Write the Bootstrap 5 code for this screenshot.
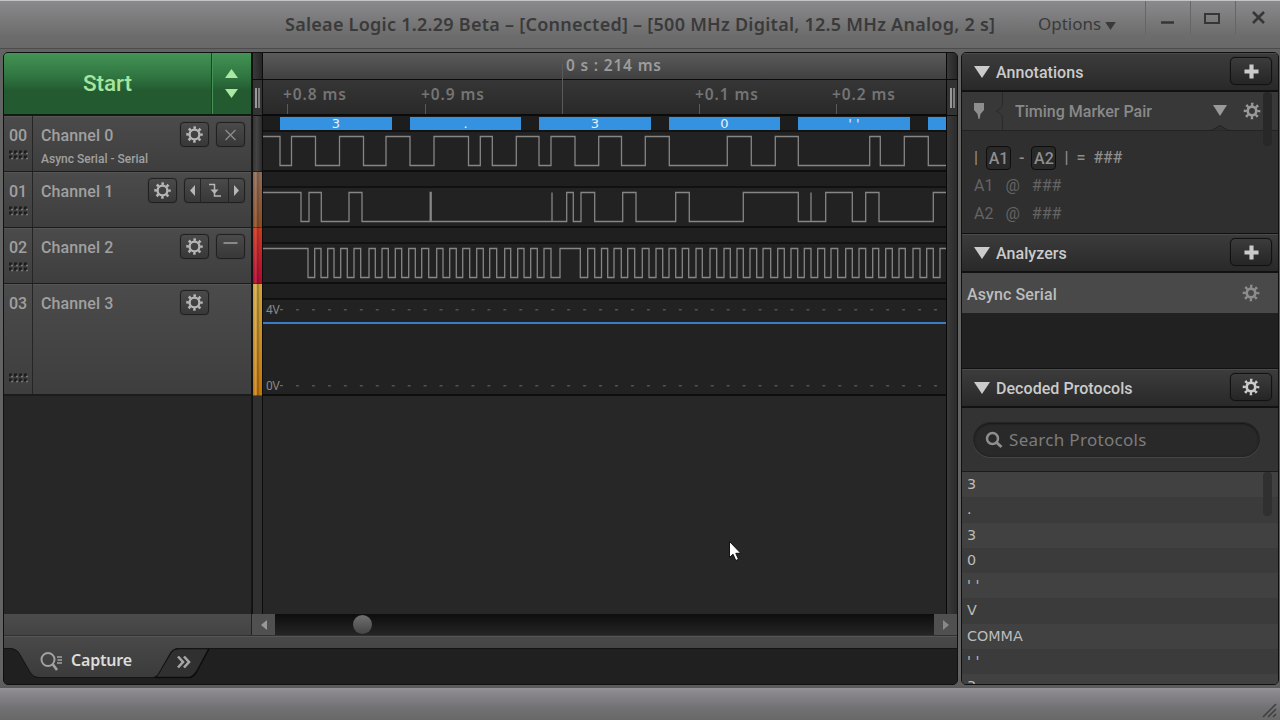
<!DOCTYPE html>
<html lang="en">
<head>
  <meta charset="UTF-8">
  <title>Saleae Logic</title>
  <meta name="viewport" content="width=device-width, initial-scale=1">
  <link href="https://cdn.jsdelivr.net/npm/bootstrap@5.3.3/dist/css/bootstrap.min.css" rel="stylesheet">
  <style>
    body {
      width: 1280px;
      height: 720px;
      overflow: hidden;
      background: #606060;
      font-family: Roboto, "Liberation Sans", sans-serif;
      font-size: 16px;
      line-height: 20px;
      color: #a0a0a0;
      cursor: default;
    }
    svg { display: block; flex: none; }
    .noto { font-family: "Noto Sans", "Open Sans", sans-serif; }

    /* window frame */
    .title-bar {
      height: 49px;
      background: linear-gradient(#8a898c, #6c6c6c 75%, #686868);
      border-top: 1px solid #c4c4c4;
      border-bottom: 1px solid #4c4c4c;
      color: #3a3a3a;
      padding-bottom: 2px;
    }
    .win-title { width: 712px; margin-left: 285px; font-size: 18px; font-weight: 600; letter-spacing: .26px; white-space: nowrap; }
    .options-menu { margin-left: 41px; width: 84px; font-size: 17px; }
    .win-btn { width: 45px; height: 34px; border-left: 1px solid #666; }
    .work-area { height: 639px; padding: 3px 1px 0 3px; gap: 3px; background: linear-gradient(#636363 98%, #5a5a5a); }
    .status-bar { height: 32px; background: linear-gradient(#8e8c90, #717073 60%, #686868); border-top: 2px solid #929092; padding: 0 3px 2px 0; }
    .pane { border: 1px solid #101010; border-radius: 5px; overflow: hidden; }

    /* left pane */
    .logic-pane { width: 955px; height: 633px; background: #272727; }
    .side { width: 248px; border-right: 1px solid #151515; }
    .start-row { height: 63px; border-bottom: 2px solid #111c13; background: linear-gradient(#439455, #2f7440 40%, #235a30 62%, #245a31); color: #a5e59c; }
    .start-main { font-size: 22.5px; font-weight: 500; border-right: 1px solid #1b4425; box-shadow: 1px 0 0 #479357; padding-bottom: 1px; }
    .start-steps { width: 39px; gap: 11px; }
    .strip { width: 11px; background: #303030; border-left: 1px solid #111; border-right: 1px solid #0c0c0c; }
    .strip-top { height: 63px; }
    .strip-cap { height: 27px; border-bottom: 1px solid #0b0b0b; background: linear-gradient(90deg, #3a3a3a, #262626); }
    .strip-grip { height: 36px; border-bottom: 1px solid #0b0b0b; background: #333; }
    .grip-lines { width: 5px; height: 20px; border-left: 2px solid #999; border-right: 2px solid #808080; }
    .channel { height: 56px; border-bottom: 1px solid #1c1c1c; box-shadow: inset 0 1px 0 #555; background: linear-gradient(#4b4b4b, #3e3e3e); }
    .channel.tall { height: 112px; border-bottom-width: 2px; }
    .ch-num { width: 29px; border-right: 1px solid #252525; padding: 10px 0 11px; font-weight: 500; }
    .ch-body { padding: 6px 6px 0 8px; }
    .ch-name { font-weight: 500; line-height: 28px; height: 25px; letter-spacing: .1px; }
    .ch-tools { gap: 7px; }
    .ch-sub { font-size: 12px; line-height: 14px; margin-top: 5px; font-weight: 500; }
    .tool { height: 25px; width: 29px; border: 1px solid #202020; border-radius: 4px; background: linear-gradient(#4a4a4a, #383838); box-shadow: 0 0 1px #222; color: #b6b6b6; }
    .tool.triple { width: 61px; }
    .tool.triple span { height: 23px; border-left: 1px solid #252525; }
    .tool.triple span:first-child { border-left: 0; }
    .tool-space { width: 29px; }
    .lane-color { height: 56px; border-bottom: 1px solid #00000080; }
    .lane-color.tall { height: 112px; }
    .lane-0 { background: linear-gradient(90deg, #343434, #444 40%, #2b2b2b); }
    .lane-1 { background: linear-gradient(90deg, #0000 10%, #ffffff22 25% 35%, #0002 50% 60%, #0000 75%), linear-gradient(#8d6a56, #8a4c22); }
    .lane-2 { background: linear-gradient(90deg, #0000 10%, #ffffff1c 25% 35%, #0002 50% 60%, #0000 75%), linear-gradient(#cd3b20, #b00834); }
    .lane-3 { background: linear-gradient(90deg, #0000 10%, #ffffff38 25% 35%, #0003 50% 60%, #0000 75%), linear-gradient(#cda43a, #c47608); }
    .plot { width: 683px; }
    .lane { height: 56px; background: #222; border-bottom: 2px solid #0e0e0e; }
    .lane.tall { height: 112px; }
    .bubbles { height: 16px; gap: 18px; padding: 1px 0 0 17px; border-bottom: 2px solid #121212; overflow: hidden; background: #1d1d1d; }
    .bubble { flex: none; height: 13px; background: #3592e0; color: #e6f2ff; font-size: 13px; font-weight: 500; line-height: 13px; text-align: center; overflow: hidden; font-family: "DejaVu Sans", sans-serif; }
    .lane-gap { height: 16px; border-bottom: 2px solid #111; background: #1f1f1f; }
    .gutter { width: 11px; border-left: 1px solid #080808; background: linear-gradient(90deg, #3a3a3a, #2b2b2b); }
    .scroll-row { height: 22px; background: linear-gradient(#4c4c4c, #434343); border-bottom: 1px solid #303030; }
    .scroll-left { width: 248px; border-right: 1px solid #222; }
    .scroll-btn { width: 23px; background: #505050; }
    .scroll-track { background: linear-gradient(#0d0d0d, #252525); padding: 1px 0 0 78px; }
    .scroll-knob { width: 19px; height: 19px; border-radius: 50%; background: linear-gradient(#707070, #454545); }

    /* right pane */
    .side-pane { width: 318px; height: 633px; background: #333; }
    .sec-head { height: 39px; border-bottom: 2px solid #111; background: linear-gradient(#3c3c3c, #292929); box-shadow: inset 0 1px 0 #4a4a4a; padding: 0 6px 0 12px; color: #cbcbcb; font-size: 16px; font-weight: 500; }
    .sec-head.later { height: 40px; border-top: 1px solid #111; }
    .sec-head .label { margin: 3px 0 0 6px; letter-spacing: .05px; }
    .sec-btn { width: 42px; height: 28px; border: 1px solid #121212; border-radius: 5px; background: linear-gradient(#3c3c3c, #252525); box-shadow: 0 0 1px #111; margin-bottom: 1px; }
    .marker-head { height: 39px; background: #383838; border-bottom: 1px solid #232323; color: #898989; font-size: 16px; font-weight: 500; }
    .marker-name { padding-top: 2px; }
    .marker-body { height: 102px; background: #2f2f2f; padding: 12px 0 0 12px; color: #646464; font-size: 16px; line-height: 28px; }
    .marker-body .expr { color: #8e8e8e; font-weight: 500; height: 29px; }
    .marker-body .at { margin: 0 12px 0 12px; }
    .key { width: 25px; height: 24px; line-height: 23px; border: 1px solid #0e0e0e; border-radius: 4px; background: #292929; text-align: center; }
    .key + .dash { margin: 0 7px 0 8px; }
    .sec-thumb { top: 40px; right: 6px; width: 9px; height: 54px; background: #282828; border-radius: 4px; }
    .proto-thumb { top: 0; right: 6px; width: 9px; height: 44px; background: #303030; border-radius: 4px; }
    .analyzer { height: 40px; background: #494949; color: #bcbcbc; padding: 4px 18px 0 5px; font-size: 16px; font-weight: 500; letter-spacing: .1px; }
    .analyzer-space { height: 55px; background: #212121; }
    .search-wrap { height: 63px; padding: 14px 18px 0 11px; }
    .search-box { height: 35px; border-radius: 18px; background: #292929; border: 1px solid #242424; box-shadow: inset 0 1px 2px #161616, 0 1px 0 #454545; padding-left: 11px; gap: 6px; color: #7c7c7c; font-size: 17px; }
    .search-hint { letter-spacing: .3px; }
    .protocols { border-top: 1px solid #1c1c1c; background: #3b3b3b; overflow: hidden; height: 213px; font-family: "DejaVu Sans", sans-serif; }
    .proto { height: 25.3px; line-height: 24.6px; padding-left: 5px; font-size: 14.3px; color: #bcbcbc; }
    .proto:nth-child(odd) { background: #414141; }
    .pointer { left: 728px; top: 540px; }
  </style>
</head>
<body>
  <svg width="0" height="0" class="position-absolute">
    <defs>
      <symbol id="gear" viewBox="0 0 18 18">
        <circle cx="9" cy="9" r="5.200" fill="none" stroke="currentColor" stroke-width="2.500"/>
        <circle cx="9" cy="9" r="7.300" fill="none" stroke="currentColor" stroke-width="2.800" stroke-dasharray="2.700 3.033" stroke-dashoffset="1.350"/>
      </symbol>
      <symbol id="gear-thin" viewBox="0 0 18 18">
        <circle cx="9" cy="9" r="4.300" fill="none" stroke="currentColor" stroke-width="2.700"/>
        <circle cx="9" cy="9" r="6.700" fill="none" stroke="currentColor" stroke-width="3.200" stroke-dasharray="2.300 2.962" stroke-dashoffset="1.150"/>
      </symbol>
      <symbol id="plus" viewBox="0 0 16 16"><path d="M8 .5v15M.5 8h15" stroke="currentColor" stroke-width="4.400"/></symbol>
      <symbol id="caret" viewBox="0 0 16 12"><path d="M0 0h16L8 12z" fill="currentColor"/></symbol>
      <symbol id="dots" viewBox="0 0 21 10">
        <path d="M1 2h3m2 0h3m2 0h3m2 0h3M1 7h3m2 0h3m2 0h3m2 0h3" stroke="#1d1d1d" stroke-width="3"/>
        <path d="M3 3.500h2m3 0h2m3 0h2m3 0h2M3 8.500h2m3 0h2m3 0h2m3 0h2" stroke="#777" stroke-width="1.300"/>
      </symbol>
    </defs>
  </svg>

  <header class="title-bar noto d-flex align-items-center">
    <div class="win-title">Saleae Logic 1.2.29 Beta – [Connected] – [500 MHz Digital, 12.5 MHz Analog, 2 s]</div>
    <div class="options-menu d-flex align-items-center gap-1">Options <svg class="mt-1" width="11" height="8" viewBox="0 0 16 12"><use href="#caret"/></svg></div>
    <div class="d-flex align-self-start ms-auto">
      <div class="win-btn"><svg width="44" height="34"><path d="M15 21.500h13" stroke="#363636" stroke-width="2.500"/></svg></div>
      <div class="win-btn"><svg width="44" height="34"><rect x="14" y="13" width="14" height="9" fill="none" stroke="#363636" stroke-width="2"/></svg></div>
      <div class="win-btn"><svg width="44" height="34"><path d="M17 11l11 11M28 11l-11 11" stroke="#363636" stroke-width="2.600"/></svg></div>
    </div>
  </header>

  <main class="work-area d-flex">
    <section class="pane logic-pane d-flex flex-column">
      <div class="d-flex flex-grow-1">
        <div class="side">
          <div class="start-row d-flex">
            <div class="start-main flex-grow-1 d-flex align-items-center justify-content-center">Start</div>
            <div class="start-steps d-flex flex-column align-items-center justify-content-center">
              <svg width="13" height="9"><path d="M0 9h13L6.500 0z" fill="#a9e8a2"/></svg>
              <svg width="13" height="9"><path d="M0 0h13L6.500 9z" fill="#a9e8a2"/></svg>
            </div>
          </div>
          <div id="channels"></div>
        </div>
        <div class="strip">
          <div class="strip-top">
            <div class="strip-cap"></div>
            <div class="strip-grip d-flex align-items-center justify-content-center"><div class="grip-lines"></div></div>
          </div>
          <div class="lane-color lane-0"></div>
          <div class="lane-color lane-1"></div>
          <div class="lane-color lane-2"></div>
          <div class="lane-color lane-3 tall"></div>
        </div>
        <div class="plot">
          <svg id="ruler" width="683" height="63" font-family="Noto Sans, sans-serif" font-weight="600">
            <defs>
              <linearGradient id="rulerTop" x2="0" y2="1"><stop stop-color="#5b5b5b"/><stop offset="1" stop-color="#404040"/></linearGradient>
              <linearGradient id="rulerLow" x2="0" y2="1"><stop stop-color="#363636"/><stop offset="1" stop-color="#292929"/></linearGradient>
            </defs>
            <rect width="683" height="26" fill="url(#rulerTop)"/>
            <rect y="26" width="683" height="37" fill="#0b0b0b"/>
            <rect y="27" width="683" height="34" fill="url(#rulerLow)"/>
            <path d="M299.500 11v50" stroke="#5a5a5a"/>
            <text x="303" y="18" font-size="15.500" fill="#9c9c9c" textLength="95">0 s : 214 ms</text>
          </svg>
          <div class="lane">
            <div class="bubbles d-flex" id="bubbles"></div>
            <svg class="wave" width="683" height="38"></svg>
          </div>
          <div class="lane"><div class="lane-gap"></div><svg class="wave" width="683" height="38"></svg></div>
          <div class="lane"><div class="lane-gap"></div><svg class="wave" width="683" height="38"></svg></div>
          <div class="lane tall">
            <div class="lane-gap"></div>
            <svg width="683" height="94" font-family="Roboto, sans-serif" font-size="12" fill="#888">
              <path d="M33 9.700H683M33 85.700H683" stroke="#525252" stroke-width="1.500" stroke-dasharray="3 12.950"/>
              <path d="M17 9.700h3M17 85.700h3" stroke="#777"/>
              <text x="3" y="14" textLength="14">4V</text>
              <text x="3" y="90" textLength="14">0V</text>
              <path d="M0 23H683" stroke="#3b7cc4" stroke-width="2"/>
            </svg>
          </div>
        </div>
        <div class="gutter">
          <div class="strip-top">
            <div class="strip-cap"></div>
            <div class="strip-grip d-flex align-items-center justify-content-center"><div class="grip-lines"></div></div>
          </div>
        </div>
      </div>
      <div class="scroll-row d-flex">
        <div class="scroll-left"></div>
        <div class="scroll-btn d-flex align-items-center justify-content-center"><svg width="6" height="10"><path d="M6 0v10L0 5z" fill="#999"/></svg></div>
        <div class="scroll-track flex-grow-1"><div class="scroll-knob"></div></div>
        <div class="scroll-btn d-flex align-items-center justify-content-center"><svg width="6" height="10"><path d="M0 0v10l6-5z" fill="#888"/></svg></div>
      </div>
      <svg width="953" height="48" viewBox="0 636 953 48">
        <defs><linearGradient id="tabFill" x2="0" y2="1"><stop stop-color="#494949"/><stop offset="1" stop-color="#3b3b3b"/></linearGradient></defs>
        <rect y="636" width="953" height="48" fill="#202020"/>
        <path d="M152 677L167 652Q170 648.500 174 648.500H205L193 671Q189 677.500 185 677.500H152z" fill="#303030" stroke="#0c0c0c" stroke-width="1.500"/>
        <path d="M0 636H953V648H175Q170 648 167 652L155 673Q153 677 149 677H35Q29 677 26 672L15 653Q12 648 5 648H0z" fill="url(#tabFill)"/>
        <path d="M953 648.500H175Q170 648.500 167 652L155 673Q153 677.500 149 677.500H35Q29 677.500 26 672L15 653Q12 648.500 5 648.500H0" fill="none" stroke="#141414"/>
        <path d="M0 636.500H953" stroke="#565656"/>
        <circle cx="44" cy="659.500" r="6.500" fill="none" stroke="#a2a2a2" stroke-width="2"/>
        <path d="M48.500 664l4.500 6" stroke="#a2a2a2" stroke-width="2.600"/>
        <path d="M53 657h5M53.500 660h4.500M53 663h5" stroke="#a2a2a2" stroke-width="1.300"/>
        <text x="67" y="666" font-family="Noto Sans, sans-serif" font-weight="600" font-size="16" fill="#dcdcdc" textLength="61">Capture</text>
        <path d="M174 656.500l5 5.500-5 5.500M180 656.500l5 5.500-5 5.500" fill="none" stroke="#a6a6a6" stroke-width="2.600"/>
      </svg>
    </section>

    <aside class="pane side-pane">
      <div class="sec-head d-flex align-items-center">
        <svg width="16" height="12"><use href="#caret"/></svg>
        <span class="label">Annotations</span>
        <div class="sec-btn ms-auto d-flex align-items-center justify-content-center"><svg width="15" height="15"><use href="#plus"/></svg></div>
      </div>
      <div class="position-relative">
        <div class="marker-head d-flex align-items-center">
          <svg width="53" height="38" fill="none">
            <path d="M12 11h10v7l-3.500 4-1 5h-1l-1-5-3.500-4z" fill="#8e8e8e"/>
            <path d="M40.500 0v12q0 3-3 5l-3 2 3 2q3 2 3 5v12" stroke="#2a2a2a"/>
          </svg>
          <span class="marker-name">Timing Marker Pair</span>
          <svg class="ms-auto" width="96" height="39">
            <path d="M31 13h14l-7 11z" fill="#999"/>
            <path d="M27 38.500q4 0 6-2l5-3 5 3q2 2 6 2" fill="#2f2f2f" stroke="#232323"/>
            <g color="#999"><use href="#gear-thin" x="61" y="10" width="18" height="18"/></g>
          </svg>
        </div>
        <div class="marker-body">
          <div class="expr d-flex align-items-center">
            <span>|</span><span class="key ms-2">A1</span><span class="dash">-</span><span class="key">A2</span><span class="ms-2">|</span><span class="ms-2">=</span><span class="ms-2">###</span>
          </div>
          <div class="d-flex"><span>A1</span><span class="at">@</span><span>###</span></div>
          <div class="d-flex"><span>A2</span><span class="at">@</span><span>###</span></div>
        </div>
        <div class="position-absolute top-0 sec-thumb"></div>
      </div>
      <div class="sec-head later d-flex align-items-center">
        <svg width="16" height="12"><use href="#caret"/></svg>
        <span class="label">Analyzers</span>
        <div class="sec-btn ms-auto d-flex align-items-center justify-content-center"><svg width="15" height="15"><use href="#plus"/></svg></div>
      </div>
      <div class="analyzer d-flex align-items-center justify-content-between">Async Serial <svg class="mb-1" width="18" height="18" color="#8d8d8d"><use href="#gear-thin"/></svg></div>
      <div class="analyzer-space"></div>
      <div class="sec-head later d-flex align-items-center">
        <svg width="16" height="12"><use href="#caret"/></svg>
        <span class="label">Decoded Protocols</span>
        <div class="sec-btn ms-auto d-flex align-items-center justify-content-center"><svg width="18" height="18"><use href="#gear-thin"/></svg></div>
      </div>
      <div class="search-wrap">
        <div class="search-box noto d-flex align-items-center">
          <svg width="18" height="18" fill="none" stroke="#8e8e8e"><circle cx="7.500" cy="7.500" r="5.500" stroke-width="2.500"/><path d="M11.500 11.500l5 4.500" stroke-width="3"/></svg>
          <span class="search-hint">Search Protocols</span>
        </div>
      </div>
      <div class="protocols position-relative"><div id="protocols"></div><div class="position-absolute proto-thumb"></div></div>
    </aside>
  </main>

  <footer class="status-bar d-flex align-items-end justify-content-end">
    <svg width="15" height="15" stroke="#3e3e3e" stroke-width="1.500"><path d="M1 14L14 1M6 14l8-8M11 14l3-3"/></svg>
  </footer>

  <svg class="pointer position-absolute" width="15" height="24"><path d="M1.500 1.500v16l3.500-3.300 2.800 6.300 2.700-1.200-2.700-6h5z" fill="#fff" stroke="#111"/></svg>

  <script src="https://cdn.jsdelivr.net/npm/bootstrap@5.3.3/dist/js/bootstrap.bundle.min.js"></script>
  <script>
    const gearBtn = '<div class="tool d-flex align-items-center justify-content-center"><svg width="17" height="17"><use href="#gear"/></svg></div>';
    const channels = [
      { num: "00", name: "Channel 0", sub: "Async Serial - Serial",
        extra: '<div class="tool"><svg width="27" height="23"><path d="M8.500 7l10 10M18.500 7l-10 10" stroke="#8c8c8c" stroke-width="1.300"/></svg></div>' },
      { num: "01", name: "Channel 1",
        extra: `<div class="tool triple d-flex">
          <span><svg width="15" height="23"><path d="M10 6v11L5 11.500z" fill="#b6b6b6"/></svg></span>
          <span><svg width="27" height="23"><path d="M8 5.500h5.500V17H20" fill="none" stroke="#b6b6b6" stroke-width="1.500"/><path d="M9.500 10.500h8l-4 4.500z" fill="#b6b6b6"/></svg></span>
          <span><svg width="15" height="23"><path d="M5 6v11l5-5.500z" fill="#b6b6b6"/></svg></span></div>` },
      { num: "02", name: "Channel 2",
        extra: '<div class="tool"><svg width="27" height="23"><path d="M6.500 8h14" stroke="#a0a0a0" stroke-width="1.300"/></svg></div>' },
      { num: "03", name: "Channel 3", tall: true, extra: '<div class="tool-space"></div>' }
    ];

    document.getElementById("channels").innerHTML = channels.map(c => `
      <div class="channel d-flex ${c.tall ? "tall" : ""}">
        <div class="ch-num d-flex flex-column align-items-center justify-content-between">${c.num}
          <svg width="21" height="10"><use href="#dots"/></svg>
        </div>
        <div class="ch-body flex-grow-1">
          <div class="d-flex">
            <div class="ch-name me-auto">${c.name}</div>
            <div class="ch-tools d-flex">${gearBtn}${c.extra}</div>
          </div>
          ${c.sub ? `<div class="ch-sub">${c.sub}</div>` : ""}
        </div>
      </div>`).join("");

    const bubbles = [[112, "3"], [111, "."], [112, "3"], [111, "0"], [112, "' '"], [18, ""]];
    document.getElementById("bubbles").innerHTML = bubbles
      .map(([w, t]) => `<div class="bubble" style="width:${w}px">${t}</div>`).join("");

    // ruler ticks, x measured from the left end of the plot
    const ticks = [[24.5, "+0.8 ms"], [162.5, "+0.9 ms"], [436.5, "+0.1 ms"], [573.5, "+0.2 ms"]];
    document.getElementById("ruler").innerHTML += ticks.map(([x, t]) => `
      <path d="M${x} 51v10" stroke="#5a5a5a"/>
      <text x="${x - 4.5}" y="47" font-size="15.5" fill="#747474" textLength="63">${t}</text>`).join("");

    // every edge toggles the level, all traces start high
    const edges = [
      [280, 291.5, 315.5, 339.5, 363.5, 386, 410, 434, 468.5, 480.3, 492.3, 516.3, 539, 551, 575, 598.7, 621.5, 645.3,
        669.3, 727.3, 751.3, 775.3, 798.3, 869.7, 880.3, 904.3, 928.3],
      [301, 309, 321.3, 349, 362, 430.2, 431.2, 552, 552, 566.7, 573.3, 581, 594.7, 622.7, 636, 675.7, 689.3, 743.3,
        798.3, 811, 811, 825.7, 852.3, 865.7, 879, 933.3],
      [308, 314.7, 321, 327.7, 334, 340.7, 347.3, 354, 360.7, 369, 375.3, 382, 388.3, 395.3, 401.7, 408.7, 415.3, 421.7,
        428.7, 436.7, 443, 449.7, 456.3, 462.7, 469.7, 476.7, 483.3, 489.7, 496.7, 504.7, 510.7, 517.7, 524, 530.7,
        537.3, 544, 551, 560, 580.3, 587.7, 594.7, 601.5, 607.7, 614, 621.3, 627.7, 634.7, 642.3, 649, 656, 662.7,
        669, 675.7, 682.3, 688.7, 696, 702.3, 710, 716.7, 724, 730.3, 737, 743.3, 750, 756.7, 763, 770.7, 777.7,
        784.3, 791, 797.7, 804.3, 811, 817.7, 824.7, 831, 837.7, 845.7, 852.3, 859, 865.7, 872.7, 878.7, 885.7,
        892.3, 899, 905.3, 913, 920, 926.7, 933.3, 940]
    ];
    document.querySelectorAll(".wave").forEach((svg, i) => {
      const hi = 4.5, lo = 33.5;
      let y = hi;
      let d = `M0 ${y}`;
      edges[i].forEach(x => {
        d += `H${(x - 263).toFixed(1)}`;
        y = y === hi ? lo : hi;
        d += `V${y}`;
      });
      svg.innerHTML = `<path d="${d}H683" fill="none" stroke="#868686" stroke-width="1.3"/>`;
    });

    const decoded = ["3", ".", "3", "0", "' '", "V", "COMMA", "' '", "3"];
    document.getElementById("protocols").innerHTML = decoded.map(t => `<div class="proto">${t}</div>`).join("");
  </script>
</body>
</html>
